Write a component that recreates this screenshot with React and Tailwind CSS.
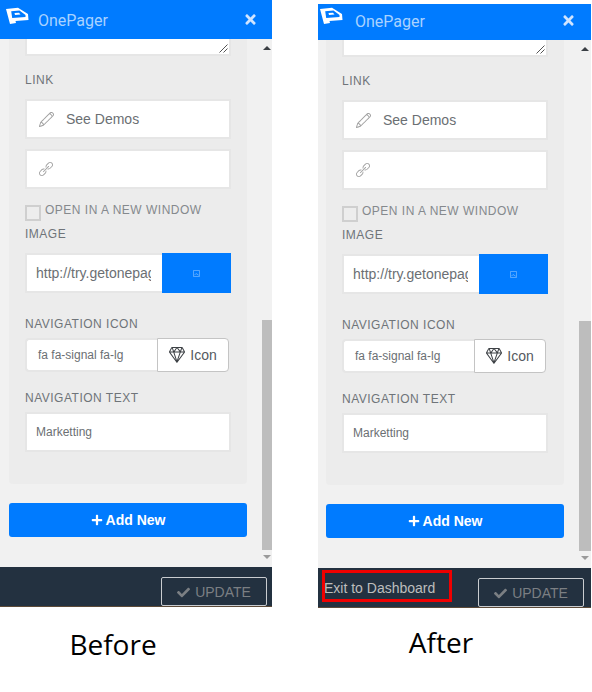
import { FaCheck, FaPlus, FaTimes } from "react-icons/fa";
import { SlDiamond, SlLink, SlPencil } from "react-icons/sl";

const arial = { fontFamily: '"Liberation Sans", Arial, sans-serif' };

function Logo() {
  return (
    <svg viewBox="0 0 23 17" className="h-[17px] w-[23px]" fill="#fff">
      <path
        fillRule="evenodd"
        d="M0 2 L12 0.8 L22 7 L22.5 13 L9.5 14 L10 16 L4 17 Z M5.2 4.2 L6.2 11 L19.5 10 L19.5 8 L13.5 3.6 Z"
      />
      <path d="M8.5 6 L13 5.7 L14.5 7.5 L9 8 Z" />
    </svg>
  );
}

function Label({ children, className = "" }) {
  return (
    <div className={`text-[12px] leading-[14px] tracking-[0.5px] text-[#6f7479] ${className}`}>
      {children}
    </div>
  );
}

function Box({ children, className = "" }) {
  return (
    <div className={`flex h-[40px] w-[206px] items-center border-2 border-[#e6e6e6] bg-white ${className}`}>
      {children}
    </div>
  );
}

function Panel({ after }) {
  return (
    <div className={after ? "ml-[46px] mt-[4px] w-[273px]" : "w-[272px]"}>
      <header className={`${after ? "h-[36px]" : "h-[39px]"} flex items-start bg-[#007bff]`}>
        <div className={after ? "ml-[2px] mt-[3px]" : "ml-[6px] mt-[7px]"}>
          <Logo />
        </div>
        <span
          className={`${after ? "ml-[12px] mt-[8px]" : "ml-[9px] mt-[11px]"} text-[16px] leading-[20px] text-[#a9d2ff]`}
          style={{ fontFamily: "Roboto, sans-serif" }}
        >
          OnePager
        </span>
        <FaTimes className={`${after ? "mr-[15px] mt-[9px]" : "mr-[14px] mt-[12px]"} ml-auto text-[15px] text-[#cfe4ff]`} />
      </header>

      <div className="flex h-[528px] overflow-hidden bg-[#f1f1f1]" style={arial}>
        <div className="min-w-0 flex-1">
          <div className={`${after ? "ml-[8px]" : "ml-[9px]"} h-[445px] w-[238px] rounded-b-[4px] bg-[#ececec] px-[16px]`}>
            <div className="relative h-[17px] w-[206px] border-2 border-t-0 border-[#e6e6e6] bg-white">
              <svg viewBox="0 0 9 9" className="absolute bottom-[1px] right-[1px] h-[9px] w-[9px]" stroke="#555" fill="none">
                <path d="M0.5 8.5 L8.5 0.5 M4.5 8.5 L8.5 4.5" />
              </svg>
            </div>
            <Label className="mt-[17px]">LINK</Label>
            <Box className="mt-[12px] pl-[12px]">
              <SlPencil className="text-[15px] text-[#a0a0a0]" />
              <span className="ml-[12px] text-[14px] text-[#6b6f73]">See Demos</span>
            </Box>
            <Box className="mt-[10px] pl-[12px]">
              <SlLink className="text-[14px] text-[#a0a0a0]" />
            </Box>
            <div className="mt-[14px] flex items-start">
              <div className="mt-[2px] h-[16px] w-[16px] border-2 border-[#cfcfcf] bg-[#ededed]" />
              <span className="ml-[4px] text-[12px] leading-[14px] tracking-[0.5px] text-[#85898d]">OPEN IN A NEW WINDOW</span>
            </div>
            <Label className="mt-[6px]">IMAGE</Label>
            <div className="mt-[12px] flex h-[40px] w-[206px]">
              <div className="flex w-[137px] items-center border-2 border-r-0 border-[#e6e6e6] bg-white pl-[9px] pr-[11px]">
                <span className="overflow-hidden whitespace-nowrap text-[14px] text-[#6b6f73]">http://try.getonepager.com</span>
              </div>
              <div className="flex flex-1 items-center justify-center bg-[#007bff]">
                <svg viewBox="0 0 8 8" className="h-[7px] w-[7px]" fill="none" stroke="#66b0ff">
                  <path d="M0.5 0.5 H7.5 V7.5 H0.5 Z M1.5 6 L3.5 4 L6.5 6" />
                </svg>
              </div>
            </div>
            <Label className="mt-[24px]">NAVIGATION ICON</Label>
            <div className="mt-[7px] flex h-[34px] w-[204px]">
              <div className="flex w-[132px] items-center rounded-l-[4px] border-2 border-r-0 border-[#e6e6e6] bg-white pl-[11px] text-[12px] text-[#6b6f73]">
                fa fa-signal fa-lg
              </div>
              <div className="flex flex-1 items-center justify-center gap-[5px] rounded-r-[4px] border border-[#c4c4c4] bg-white text-[14px] text-[#555a5f]">
                <SlDiamond className="text-[16px] text-[#3d4145]" />
                Icon
              </div>
            </div>
            <Label className="mt-[19px]">NAVIGATION TEXT</Label>
            <Box className="mt-[7px] pl-[9px]">
              <span className="text-[12px] text-[#6b6f73]">Marketting</span>
            </Box>
          </div>
          <button className={`${after ? "ml-[8px]" : "ml-[9px]"} mt-[19px] flex h-[34px] w-[238px] items-center justify-center gap-[3px] rounded-[3px] bg-[#007bff] text-[14px] font-bold text-white`}>
            <FaPlus className="text-[12px]" />
            Add New
          </button>
        </div>
        <div className={`${after ? "w-[12px]" : "w-[10px]"} flex shrink-0 flex-col bg-[#f1f1f1]`}>
          <div className="mx-auto mt-[7px] h-0 w-0 border-x-[4px] border-b-[4px] border-x-transparent border-b-[#3a3f44]" />
          <div className="mt-[270px] h-[230px] bg-[#bdbdbd]" />
          <div className="mx-auto mt-[5px] h-0 w-0 border-x-[4px] border-t-[4px] border-x-transparent border-t-[#9a9a9a]" />
        </div>
      </div>

      <footer className="relative flex h-[40px] items-start border-b border-[#5c4a38] bg-[#233140]" style={arial}>
        {after && (
          <>
            <span className="ml-[6px] mt-[11px] text-[14px] leading-[18px] text-[#bdbdbd]">Exit to Dashboard</span>
            <div className="absolute left-[4px] top-[2px] h-[32px] w-[130px] border-[3px] border-[#f00000]" />
          </>
        )}
        <button className={`${after ? "mr-[7px]" : "mr-[5px]"} ml-auto mt-[10px] flex h-[29px] w-[106px] items-center justify-center gap-[5px] rounded-[2px] border border-[#c9ccd0] pt-[1px] text-[14px] text-[#7b7f83]`}>
          <FaCheck className="text-[13px]" />
          UPDATE
        </button>
      </footer>
    </div>
  );
}

function Caption({ children, className = "" }) {
  return (
    <div className={`text-center text-[28px] leading-[38px] text-black ${className}`} style={{ fontFamily: '"Open Sans", sans-serif' }}>
      {children}
    </div>
  );
}

export default function App() {
  return (
    <div className="h-[692px] w-[592px] overflow-hidden bg-white">
      <div className="flex items-start">
        <Panel />
        <Panel after />
      </div>
      <div className="flex">
        <Caption className="mt-[17px] w-[226px]">Before</Caption>
        <Caption className="ml-[102px] mt-[15px] w-[226px]">After</Caption>
      </div>
    </div>
  );
}
